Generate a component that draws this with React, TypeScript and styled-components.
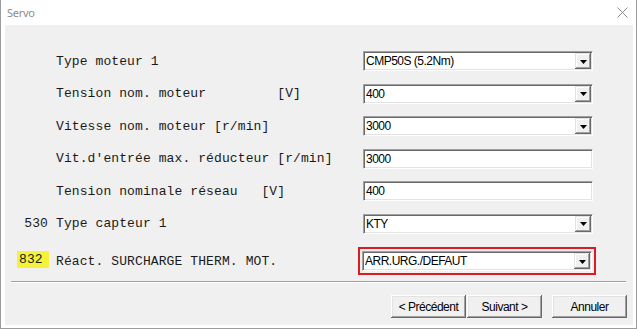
import React from "react";
import styled, { createGlobalStyle } from "styled-components";

type Field = {
    num?: string;
    label: string;
    kind: "combo" | "edit";
    value: string;
    flagged?: boolean;
};

const fields: Field[] = [
    { label: "Type moteur 1", kind: "combo", value: "CMP50S (5.2Nm)" },
    { label: "Tension nom. moteur         [V]", kind: "combo", value: "400" },
    { label: "Vitesse nom. moteur [r/min]", kind: "combo", value: "3000" },
    { label: "Vit.d'entrée max. réducteur [r/min]", kind: "edit", value: "3000" },
    { label: "Tension nominale réseau   [V]", kind: "edit", value: "400" },
    { num: "530", label: "Type capteur 1", kind: "combo", value: "KTY" },
];

const lastField: Field = {
    num: "832",
    label: "Réact. SURCHARGE THERM. MOT.",
    kind: "combo",
    value: "ARR.URG./DEFAUT",
    flagged: true,
};

const Control = ({ field }: { field: Field }) =>
    field.kind === "combo" ? (
        <Combo>
            <ComboText>{field.value}</ComboText>
            <DropButton>
                <svg width="7" height="4" viewBox="0 0 7 4">
                    <path d="M0 0h7L3.5 4z" fill="#000" />
                </svg>
            </DropButton>
        </Combo>
    ) : (
        <Edit>
            <ComboText>{field.value}</ComboText>
        </Edit>
    );

const App = () => {
    return (
        <>
            <GlobalStyle />
            <Window>
                <TitleBar>
                    <span>Servo</span>
                    <svg width="11" height="11" viewBox="0 0 11 11">
                        <path d="M0.5 0.5l10 10M10.5 0.5l-10 10" stroke="#8a8a8a" strokeWidth="1" />
                    </svg>
                </TitleBar>
                <Client>
                    <FormBody>
                        {fields.map((f) => (
                            <Row key={f.label} height={32.5}>
                                <Num>{f.num}</Num>
                                <Label>{f.label}</Label>
                                <Control field={f} />
                            </Row>
                        ))}
                        <Row height={30} $top={6}>
                            <Num $highlight>{lastField.num}</Num>
                            <Label>{lastField.label}</Label>
                            <RedFrame>
                                <Control field={lastField} />
                            </RedFrame>
                        </Row>
                    </FormBody>
                    <Separator />
                    <ButtonBar>
                        <Button>&lt; Précédent</Button>
                        <Button>Suivant &gt;</Button>
                        <Button $spaced>Annuler</Button>
                    </ButtonBar>
                </Client>
            </Window>
        </>
    );
};

const GlobalStyle = createGlobalStyle`
    html, body {
        margin: 0;
        padding: 0;
        background: #ffffff;
    }
    body {
        width: 637px;
        height: 329px;
        overflow: hidden;
    }
`;

const Window = styled.div`
    box-sizing: border-box;
    width: 637px;
    height: 329px;
    display: flex;
    flex-direction: column;
    background: #ffffff;
    border: 1px solid #9c9c9c;
    border-top: none;
`;

const TitleBar = styled.div`
    height: 25px;
    flex-shrink: 0;
    display: flex;
    align-items: center;
    justify-content: space-between;
    padding: 0 8px 0 6px;
    font-family: "Noto Sans", "Liberation Sans", sans-serif;
    font-size: 11px;
    letter-spacing: -0.3px;
    color: #8c8c8c;
`;

const Client = styled.div`
    flex: 1;
    margin: 0 3px 3px 4px;
    background: #f0f0f0;
    display: flex;
    flex-direction: column;
`;

const FormBody = styled.div`
    display: flex;
    flex-direction: column;
    padding: 20px 40px 0 12px;
`;

const Row = styled.div<{ height: number; $top?: number }>`
    display: flex;
    align-items: center;
    height: ${({ height }) => height}px;
    margin-top: ${({ $top }) => $top || 0}px;
`;

const Num = styled.span<{ $highlight?: boolean }>`
    box-sizing: border-box;
    width: 32px;
    flex-shrink: 0;
    font-family: "Liberation Mono", "Courier New", monospace;
    font-size: 13px;
    letter-spacing: 0.1px;
    color: #1a1a1a;
    text-align: right;
    padding-right: 1px;

    ${({ $highlight }) =>
        $highlight &&
        `
        background: #f6f23a;
        height: 17px;
        line-height: 17px;
        text-align: left;
        padding-left: 2px;
        padding-right: 0;
        margin-top: -3px;
    `};
`;

const Label = styled.span`
    flex: 1;
    padding-left: 7px;
    white-space: pre;
    font-family: "Liberation Mono", "Courier New", monospace;
    font-size: 13px;
    letter-spacing: 0.1px;
    color: #1a1a1a;
`;

const Edit = styled.div`
    box-sizing: border-box;
    width: 230px;
    height: 20px;
    display: flex;
    align-items: center;
    background: #ffffff;
    border: 1px solid;
    border-color: #a0a0a0 #ffffff #ffffff #a0a0a0;
    box-shadow: inset 1px 1px #696969, inset -1px -1px #e3e3e3;
    padding: 1px;
`;

const Combo = styled(Edit)``;

const ComboText = styled.span`
    flex: 1;
    padding-left: 1px;
    font-family: "Liberation Sans", Arial, sans-serif;
    font-size: 12px;
    letter-spacing: -0.5px;
    color: #000000;
    white-space: nowrap;
`;

const DropButton = styled.div`
    width: 16px;
    height: 16px;
    display: flex;
    align-items: center;
    justify-content: center;
    background: #f0f0f0;
    box-shadow: inset -1px -1px #696969, inset 1px 1px #e3e3e3,
        inset -2px -2px #a0a0a0, inset 2px 2px #ffffff;

    svg {
        display: block;
        margin-top: 1px;
    }
`;

const RedFrame = styled.div`
    border: 2px solid #e0181f;
    padding: 2px;
    margin-left: -4px;
    margin-right: -3px;
`;

const Separator = styled.div`
    height: 1px;
    background: #a0a0a0;
    border-bottom: 1px solid #ffffff;
    margin: 5px 7px 0 6px;
`;

const ButtonBar = styled.div`
    display: flex;
    justify-content: flex-end;
    gap: 1px;
    padding: 12px 6px 0 0;
`;

const Button = styled.div<{ $spaced?: boolean }>`
    box-sizing: border-box;
    width: 75px;
    height: 23px;
    display: flex;
    align-items: center;
    justify-content: center;
    margin-left: ${({ $spaced }) => ($spaced ? "9px" : "0")};
    background: #f0f0f0;
    box-shadow: inset -1px -1px #696969, inset 1px 1px #ffffff,
        inset -2px -2px #a0a0a0, inset 2px 2px #e3e3e3;
    font-family: "Liberation Sans", Arial, sans-serif;
    font-size: 12px;
    letter-spacing: -0.5px;
    color: #000000;
`;

export default App;
